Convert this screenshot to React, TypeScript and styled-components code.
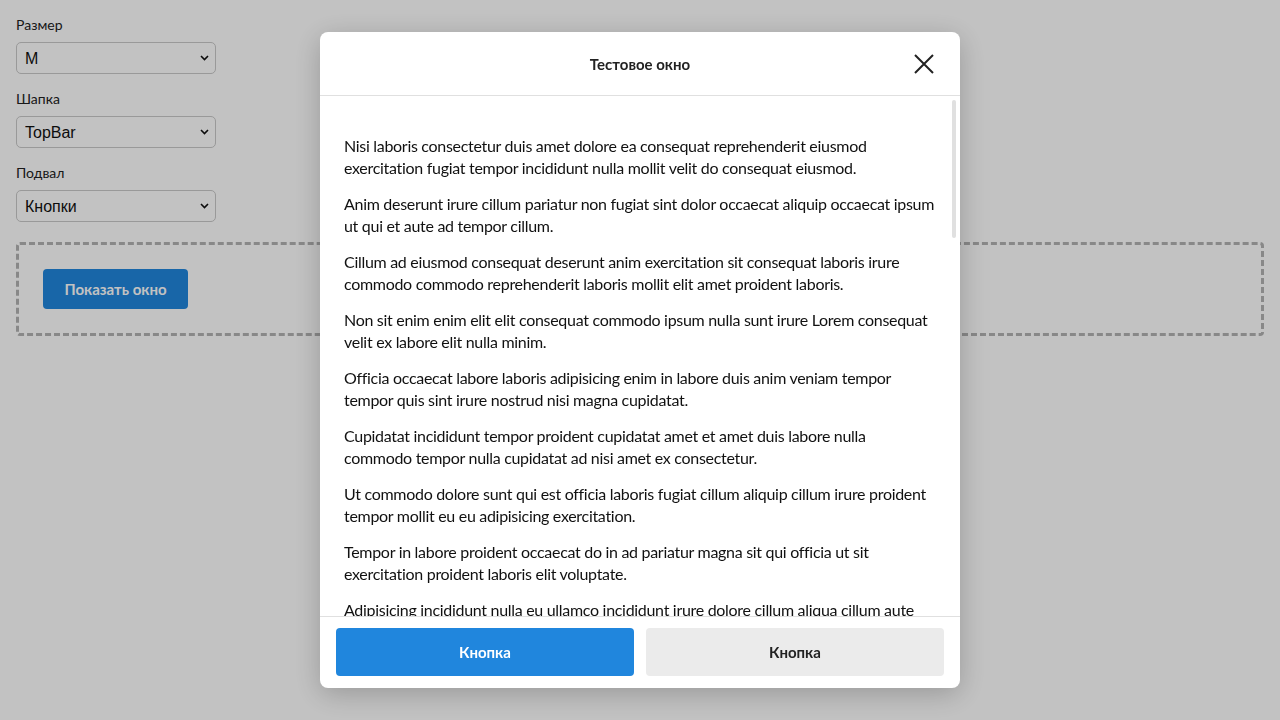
import React, { useState } from 'react'
import styled, { createGlobalStyle } from 'styled-components'

const GlobalStyle = createGlobalStyle`
  html, body {
    margin: 0;
    padding: 0;
    background: #ffffff;
    font-family: Lato, "Noto Sans", sans-serif;
    color: #222222;
  }
  * {
    box-sizing: border-box;
  }
`

const Page = styled.div`
  padding: 16px;
  display: flex;
  flex-direction: column;
`

const Field = styled.label`
  display: flex;
  flex-direction: column;
  gap: 8px;
  margin-bottom: 16px;
`

const FieldLabel = styled.span`
  font-size: 14px;
  line-height: 18px;
  color: #222;
`

const SelectWrap = styled.div`
  position: relative;
  width: 200px;
  height: 32px;
`

const Select = styled.select`
  appearance: none;
  width: 100%;
  height: 100%;
  padding: 0 24px 0 8px;
  font-family: "Liberation Sans", Arial, sans-serif;
  font-size: 16px;
  color: #111;
  background: #fff;
  border: 1px solid #c9c9c9;
  border-radius: 5px;
  outline: none;
`

const Chevron = styled.svg`
  position: absolute;
  right: 7px;
  top: 13px;
  pointer-events: none;
  color: #111;
`

const Stage = styled.div`
  margin-top: 4px;
  border: 3px dashed #b3b3b3;
  border-radius: 4px;
  padding: 24px;
  display: flex;
`

const OpenButton = styled.button`
  height: 40px;
  padding: 0 21.5px;
  border: none;
  border-radius: 4px;
  background: #2086dd;
  color: #fff;
  font-family: inherit;
  font-size: 15px;
  font-weight: 700;
  cursor: pointer;
`

const Overlay = styled.div`
  position: fixed;
  inset: 0;
  background: rgba(0, 0, 0, 0.24);
  display: flex;
  align-items: center;
  justify-content: center;
`

const Modal = styled.div`
  width: 640px;
  height: 656px;
  background: #fff;
  border-radius: 8px;
  box-shadow: 0 6px 28px rgba(0, 0, 0, 0.22);
  display: flex;
  flex-direction: column;
  overflow: hidden;
`

const Header = styled.div`
  height: 64px;
  flex: none;
  border-bottom: 1px solid #e0e0e0;
  display: grid;
  grid-template-columns: 64px 1fr 64px;
  align-items: center;
`

const Title = styled.h2`
  grid-column: 2;
  margin: 0;
  text-align: center;
  font-size: 15px;
  font-weight: 700;
  color: #222;
`

const CloseButton = styled.button`
  grid-column: 3;
  justify-self: end;
  width: 32px;
  height: 32px;
  margin-right: 20px;
  padding: 0;
  border: none;
  background: none;
  color: #222;
  display: flex;
  align-items: center;
  justify-content: center;
  cursor: pointer;
`

const BodyFrame = styled.div`
  position: relative;
  flex: 1;
  min-height: 0;
  display: flex;
`

const Body = styled.div`
  flex: 1;
  overflow-y: auto;
  padding: 39px 24px 0 24px;
  scrollbar-width: none;

  &::-webkit-scrollbar {
    display: none;
  }
`

const ScrollThumb = styled.div`
  position: absolute;
  top: 4px;
  right: 4px;
  width: 4px;
  border-radius: 2px;
  background: #e0e0e0;
  pointer-events: none;
`

const Paragraph = styled.p`
  margin: 0 0 14px;
  font-size: 16px;
  line-height: 22px;
  letter-spacing: -0.3px;
  color: #111;
`

const Footer = styled.div`
  flex: none;
  border-top: 1px solid #e0e0e0;
  padding: 11px 16px 12px;
  display: grid;
  grid-template-columns: 1fr 1fr;
  gap: 12px;
`

const FooterButton = styled.button<{ $primary?: boolean }>`
  height: 48px;
  border: none;
  border-radius: 4px;
  background: ${p => (p.$primary ? '#2086dd' : '#ebebeb')};
  color: ${p => (p.$primary ? '#fff' : '#222')};
  font-family: inherit;
  font-size: 15px;
  font-weight: 700;
  cursor: pointer;
`

const paragraphs = [
  'Nisi laboris consectetur duis amet dolore ea consequat reprehenderit eiusmod exercitation fugiat tempor incididunt nulla mollit velit do consequat eiusmod.',
  'Anim deserunt irure cillum pariatur non fugiat sint dolor occaecat aliquip occaecat ipsum ut qui et aute ad tempor cillum.',
  'Cillum ad eiusmod consequat deserunt anim exercitation sit consequat laboris irure commodo commodo reprehenderit laboris mollit elit amet proident laboris.',
  'Non sit enim enim elit elit consequat commodo ipsum nulla sunt irure Lorem consequat velit ex labore elit nulla minim.',
  'Officia occaecat labore laboris adipisicing enim in labore duis anim veniam tempor tempor quis sint irure nostrud nisi magna cupidatat.',
  'Cupidatat incididunt tempor proident cupidatat amet et amet duis labore nulla commodo tempor nulla cupidatat ad nisi amet ex consectetur.',
  'Ut commodo dolore sunt qui est officia laboris fugiat cillum aliquip cillum irure proident tempor mollit eu eu adipisicing exercitation.',
  'Tempor in labore proident occaecat do in ad pariatur magna sit qui officia ut sit exercitation proident laboris elit voluptate.',
  'Adipisicing incididunt nulla eu ullamco incididunt irure dolore cillum aliqua cillum aute consequat veniam sint esse ad.',
  'Esse magna consequat fugiat veniam cillum proident non ex sunt excepteur dolor ipsum laborum officia.',
  'Velit est reprehenderit commodo amet sit elit pariatur laborum cupidatat ullamco mollit in velit dolor.',
  'Laboris ex aliquip sunt nisi ullamco incididunt proident adipisicing sint irure aliqua exercitation.',
  'Deserunt id culpa aute mollit fugiat ad minim consectetur esse aliquip anim duis laborum.',
  'Mollit magna minim duis eiusmod laboris aliquip commodo excepteur ullamco voluptate dolor.',
  'Eu nulla esse ex occaecat aliqua sit nostrud laborum velit irure consequat culpa tempor.',
  'Quis occaecat nulla laboris duis dolore sunt amet officia minim fugiat reprehenderit.',
  'Consequat incididunt deserunt laboris ullamco culpa est cillum ipsum est commodo sint.',
  'Aute ullamco dolor incididunt ea pariatur nostrud et ad laborum cupidatat velit.',
  'Sint irure laborum labore ipsum esse dolore anim ex magna officia ea voluptate.',
  'Excepteur aute cupidatat in ipsum nulla amet aliqua ullamco enim esse sunt.',
  'Dolore eiusmod nostrud ut irure velit commodo nulla id exercitation ex fugiat.',
  'Fugiat esse adipisicing est sunt eu nisi labore pariatur veniam nostrud magna.',
  'Id ea ipsum pariatur aliquip sit tempor laborum non consectetur proident sint.',
  'Reprehenderit proident dolore ex ea irure cillum sunt eiusmod deserunt commodo.',
  'Elit sunt amet exercitation occaecat pariatur mollit ullamco tempor do ullamco ex.',
  'Labore culpa ad aute anim consectetur est nisi quis sit occaecat cupidatat.',
  'Magna dolor ad cillum proident do voluptate ex nisi occaecat veniam eu.',
  'Ad quis exercitation aliquip deserunt dolor nostrud id aliquip do enim labore.',
  'Amet nostrud cupidatat laboris aute nisi ipsum do velit ut fugiat commodo.',
  'Occaecat voluptate dolore adipisicing fugiat minim nostrud esse nulla amet.',
]

const CloseIcon: React.FC = () => (
  <svg width="20" height="20" viewBox="0 0 20 20" fill="none">
    <path d="M1 1L19 19M19 1L1 19" stroke="currentColor" strokeWidth="2" />
  </svg>
)

interface DropdownProps {
  value: string
  onChange: (v: string) => void
  options: { value: string; label: string }[]
}

const Dropdown: React.FC<DropdownProps> = ({ value, onChange, options }) => (
  <SelectWrap>
    <Select value={value} onChange={e => onChange(e.target.value)}>
      {options.map(o => (
        <option key={o.value} value={o.value}>
          {o.label}
        </option>
      ))}
    </Select>
    <Chevron width="9" height="6" viewBox="0 0 9 6" fill="none">
      <path d="M1 1L4.5 4.5L8 1" stroke="currentColor" strokeWidth="1.6" />
    </Chevron>
  </SelectWrap>
)

const App: React.FC = () => {
  const [size, setSize] = useState('M')
  const [header, setHeader] = useState('TopBar')
  const [footer, setFooter] = useState('buttons')
  const [open, setOpen] = useState(true)
  const [thumb, setThumb] = useState({ top: 4, height: 138 })

  const handleScroll = (e: React.UIEvent<HTMLDivElement>) => {
    const el = e.currentTarget
    const track = el.clientHeight - 8
    const height = Math.max(24, (el.clientHeight / el.scrollHeight) * track)
    const max = el.scrollHeight - el.clientHeight
    const top = 4 + (max > 0 ? (el.scrollTop / max) * (track - height) : 0)
    setThumb({ top, height })
  }

  return (
    <>
      <GlobalStyle />
      <Page>
        <Field>
          <FieldLabel>Размер</FieldLabel>
          <Dropdown
            value={size}
            onChange={setSize}
            options={[
              { value: 'S', label: 'S' },
              { value: 'M', label: 'M' },
              { value: 'L', label: 'L' },
            ]}
          />
        </Field>
        <Field>
          <FieldLabel>Шапка</FieldLabel>
          <Dropdown
            value={header}
            onChange={setHeader}
            options={[
              { value: 'TopBar', label: 'TopBar' },
              { value: 'none', label: 'Нет' },
            ]}
          />
        </Field>
        <Field>
          <FieldLabel>Подвал</FieldLabel>
          <Dropdown
            value={footer}
            onChange={setFooter}
            options={[
              { value: 'buttons', label: 'Кнопки' },
              { value: 'none', label: 'Нет' },
            ]}
          />
        </Field>
        <Stage>
          <OpenButton onClick={() => setOpen(true)}>Показать окно</OpenButton>
        </Stage>
      </Page>

      {open && (
        <Overlay>
          <Modal>
            <Header>
              <Title>Тестовое окно</Title>
              <CloseButton onClick={() => setOpen(false)} aria-label="Закрыть">
                <CloseIcon />
              </CloseButton>
            </Header>
            <BodyFrame>
              <Body onScroll={handleScroll}>
                {paragraphs.map((text, i) => (
                  <Paragraph key={i}>{text}</Paragraph>
                ))}
              </Body>
              <ScrollThumb style={{ top: thumb.top, height: thumb.height }} />
            </BodyFrame>
            <Footer>
              <FooterButton $primary>Кнопка</FooterButton>
              <FooterButton>Кнопка</FooterButton>
            </Footer>
          </Modal>
        </Overlay>
      )}
    </>
  )
}

export default App
